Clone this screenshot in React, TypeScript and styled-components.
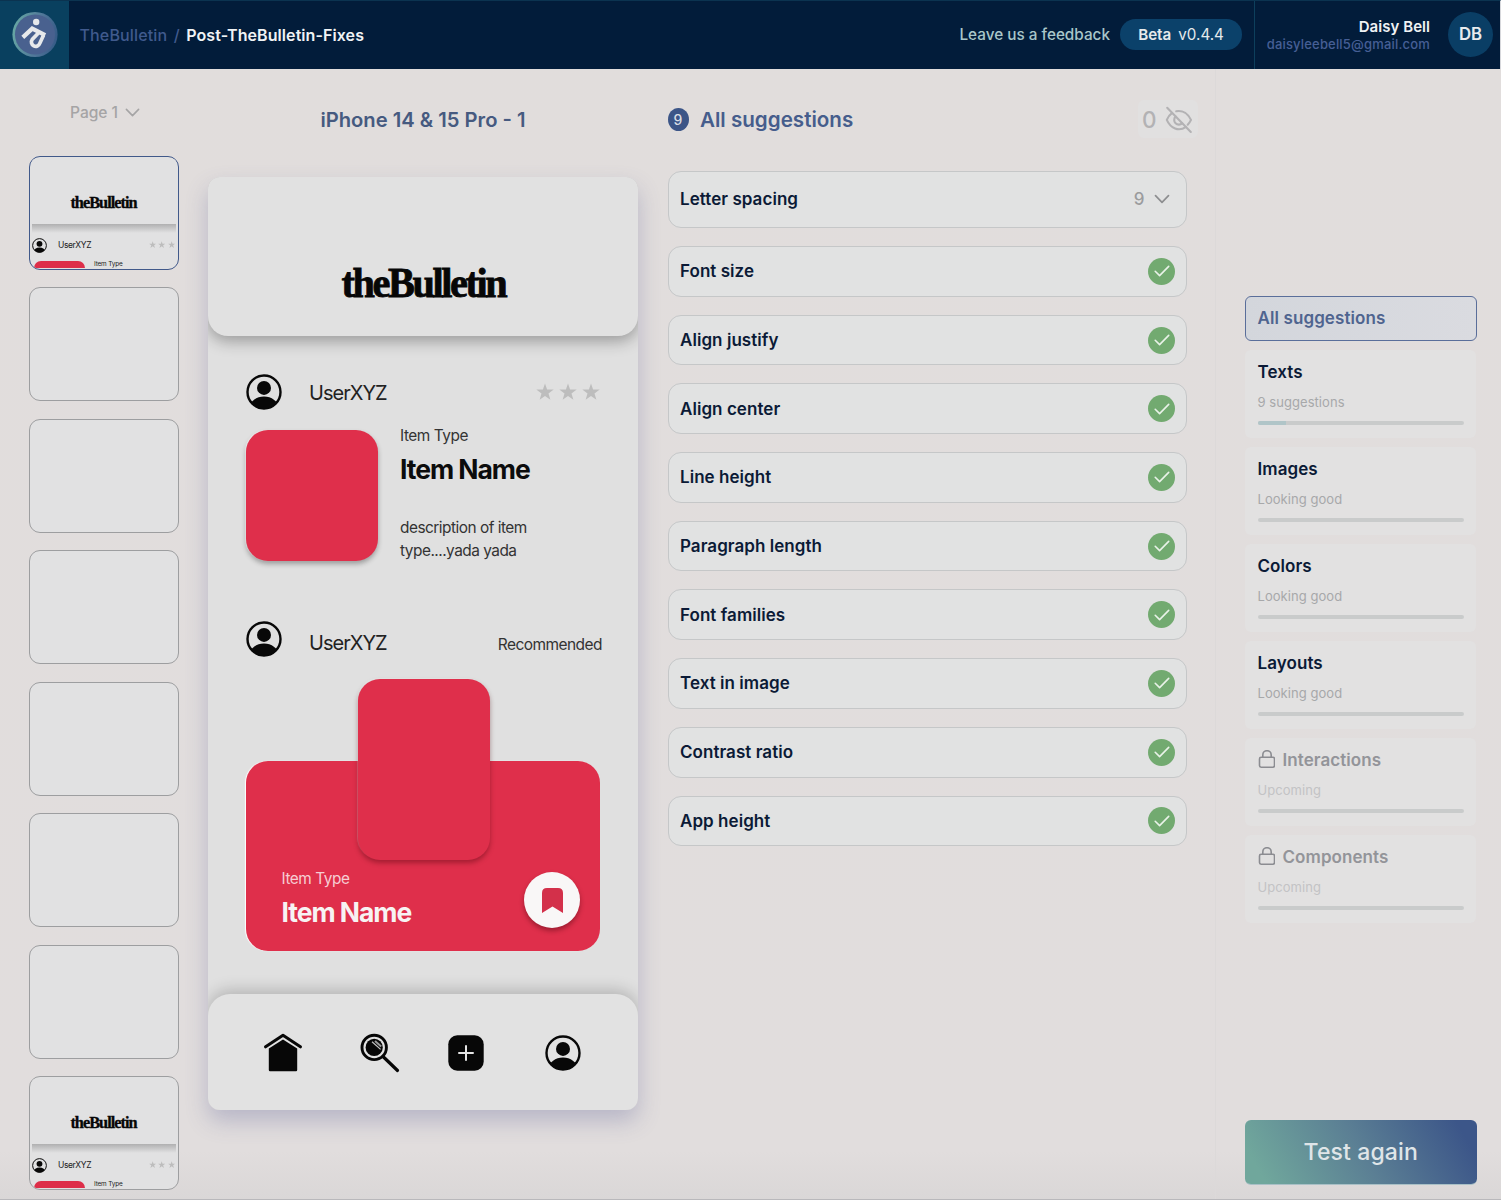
import React from "react";
import styled, { createGlobalStyle } from "styled-components";

const Global = createGlobalStyle`
  *, *::before, *::after { box-sizing: border-box; }
  body { margin: 0; background: #e1dcdc; font-family: Inter, "Liberation Sans", sans-serif; }
  svg { display: block; flex: none; }
`;

/* ---------- shell ---------- */
const Page = styled.div`
  width: 1501px;
  height: 1200px;
  overflow: hidden;
  display: flex;
  flex-direction: column;
  background: linear-gradient(180deg, #e1dddc 0%, #e1dddd 96%, #dad7d7 100%);
  border-bottom: 1px solid #b9b8bb;
`;
const TopBar = styled.header`
  height: 69px;
  flex: none;
  display: flex;
  align-items: stretch;
  background: #021c3a;
  border-top: 1px solid #0b3350;
  border-right: 1px solid #d7d8dc;
`;
const LogoBox = styled.div`
  width: 69px;
  display: flex;
  align-items: center;
  justify-content: center;
  padding-bottom: 1px;
  background: #09405f;
`;
const Crumbs = styled.nav`
  display: flex;
  align-items: center;
  gap: 6.5px;
  padding: 0 0 1px 10.5px;
  font-size: 16px;
  font-weight: 500;
  color: #405a8d;
`;
const Crumb = styled.span<{ $current?: boolean }>`
  color: ${(p) => (p.$current ? "#f0f3f5" : "#405a8d")};
  font-weight: ${(p) => (p.$current ? 600 : 500)};
  letter-spacing: ${(p) => (p.$current ? 0.08 : 0.15)}px;
`;
const BarRight = styled.div`
  margin-left: auto;
  display: flex;
  align-items: center;
`;
const Feedback = styled.span`
  font-size: 15.3px;
  font-weight: 500;
  padding-bottom: 1px;
  color: #a9c6c9;
  margin-right: 10px;
`;
const Version = styled.div`
  width: 122px;
  height: 31px;
  margin-bottom: 1px;
  border-radius: 16px;
  background: #0b416a;
  color: #e6eaec;
  display: flex;
  align-items: center;
  justify-content: center;
  gap: 7px;
  font-size: 15.2px;
  b { font-weight: 600; }
`;
const Account = styled.div`
  margin-left: 12px;
  height: 100%;
  width: 246px;
  border-left: 1px solid #0d3f5c;
  display: flex;
  align-items: center;
  justify-content: flex-end;
  gap: 18px;
  padding: 0 7px 1px 0;
`;
const Identity = styled.div`
  text-align: right;
  white-space: nowrap;
`;
const Name = styled.div`
  font-size: 15px;
  font-weight: 600;
  line-height: 18px;
  letter-spacing: 0.05px;
  color: #f0f2f4;
`;
const Mail = styled.div`
  font-size: 13px;
  line-height: 16px;
  letter-spacing: 0.18px;
  color: #465f95;
  font-weight: 500;
`;
const Initials = styled.div`
  width: 45px;
  height: 45px;
  padding-bottom: 1px;
  border-radius: 50%;
  background: #0a3e65;
  color: #e8ecee;
  font-size: 16.8px;
  font-weight: 600;
  display: flex;
  align-items: center;
  justify-content: center;
`;
const Body = styled.main`
  flex: 1;
  min-height: 0;
  display: grid;
  grid-template-columns: 208px 430px 578px 285px;
`;

/* ---------- page rail ---------- */
const Rail = styled.aside`
  padding: 32px 0 0 29px;
`;
const PagePicker = styled.div`
  display: flex;
  align-items: center;
  height: 22px;
  gap: 7px;
  margin: 0 0 33px 41px;
  font-size: 15.6px;
  font-weight: 500;
  letter-spacing: -0.05px;
  color: #a5a4a5;
`;
const ThumbList = styled.div`
  display: flex;
  flex-direction: column;
  gap: 17.5px;
`;
const Thumb = styled.div<{ $active?: boolean }>`
  width: 150px;
  height: 113.95px;
  padding: 1.5px 2px;
  border-radius: 11px;
  border: 1.5px solid ${(p) => (p.$active ? "#41598a" : "#9d9ea0")};
  background: #e1e1e2;
  overflow: hidden;
`;
const MiniHead = styled.div`
  height: 65px;
  display: flex;
  justify-content: center;
  align-items: center;
  padding-top: 22px;
  background: #e1e1e2;
`;
const MiniShade = styled.div`
  height: 9px;
  background: linear-gradient(180deg, rgba(0, 0, 0, 0.22), rgba(0, 0, 0, 0));
`;
const MiniUser = styled.div`
  margin-top: 5px;
  height: 15px;
  display: flex;
  align-items: center;
  font-size: 8.5px;
  letter-spacing: -0.4px;
  color: #222;
`;
const MiniName = styled.span`
  margin-left: 11px;
`;
const MiniItem = styled.div`
  display: flex;
  height: 8px;
  margin-top: 7px;
  padding-left: 2px;
  overflow: hidden;
  font-size: 6.4px;
  line-height: 8px;
  letter-spacing: -0.15px;
  color: #222;
  gap: 9px;
`;
const MiniRed = styled.div`
  width: 51px;
  height: 7px;
  margin-top: 1px;
  border-radius: 8px 8px 0 0;
  background: #dd2e49;
`;

/* ---------- phone preview ---------- */
const Preview = styled.section`
  display: flex;
  flex-direction: column;
  align-items: center;
`;
const ScreenTitle = styled.h2`
  margin: 37px 0 44px;
  height: 27px;
  line-height: 27px;
  font-size: 20.2px;
  font-weight: 600;
  color: #465a80;
  white-space: nowrap;
`;
const Phone = styled.div`
  width: 430px;
  height: 933px;
  border-radius: 12px;
  background: #e0e0e0;
  overflow: hidden;
  display: flex;
  flex-direction: column;
`;
const PhoneShadow = styled.div`
  border-radius: 12px;
  box-shadow: 0 11px 22px rgba(88, 94, 150, 0.3);
`;
const PhoneHead = styled.div`
  height: 159px;
  flex: none;
  border-radius: 12px 12px 20px 20px;
  background: #e1e1e1;
  box-shadow: 0 5px 16px rgba(0, 0, 0, 0.32);
  display: flex;
  align-items: center;
  justify-content: center;
  padding-top: 53px;
`;
const Wordmark = styled.span<{ $size: number; $squeeze: number }>`
  font-family: "Liberation Serif", serif;
  font-weight: 700;
  font-size: ${(p) => p.$size}px;
  line-height: 1;
  letter-spacing: -0.06em;
  color: #070707;
  -webkit-text-stroke: ${(p) => p.$size * 0.02}px #070707;
  transform: scaleX(${(p) => p.$squeeze});
  white-space: nowrap;
`;
const PhoneBody = styled.div`
  flex: 1;
  padding: 38px 36px 0 38px;
`;
const UserRow = styled.div`
  display: flex;
  align-items: center;
  height: 36px;
`;
const UserName = styled.span<{ $drop: number }>`
  margin-left: 27px;
  padding-top: ${(p) => p.$drop}px;
  font-size: 20px;
  font-weight: 400;
  letter-spacing: -0.97px;
  color: #222;
`;
const Stars = styled.div<{ $gap: number; $right?: number }>`
  margin-left: auto;
  margin-right: ${(p) => p.$right ?? 0}px;
  display: flex;
  gap: ${(p) => p.$gap}px;
`;
const Tag = styled.span`
  margin-left: auto;
  padding-top: 12px;
  font-size: 15.5px;
  letter-spacing: -0.55px;
  color: #333;
`;
const Item = styled.div`
  display: flex;
  gap: 22px;
  margin: 20px 0 58.5px;
  height: 132px;
`;
const RedTile = styled.div`
  width: 132px;
  height: 131px;
  flex: none;
  border-radius: 22px;
  background: #df2f4b;
  box-shadow: 0 3px 5px rgba(0, 0, 0, 0.3), -1px 0 1px rgba(255, 255, 255, 0.9);
`;
const ItemCopy = styled.div`
  display: flex;
  flex-direction: column;
  white-space: nowrap;
`;
const ItemType = styled.div<{ $light?: boolean }>`
  height: 20px;
  margin-top: -4px;
  line-height: 20px;
  font-size: 15.4px;
  letter-spacing: -0.45px;
  color: ${(p) => (p.$light ? "#f6cdd3" : "#343434")};
`;
const ItemName = styled.div<{ $light?: boolean }>`
  height: 32px;
  margin-top: 7px;
  line-height: 32px;
  font-size: 26.5px;
  font-weight: 700;
  letter-spacing: -1.05px;
  color: ${(p) => (p.$light ? "#f7f3f3" : "#0c0c0c")};
`;
const Description = styled.p`
  margin: 31px 0 0;
  font-size: 15.4px;
  line-height: 23px;
  letter-spacing: -0.5px;
  color: #333;
`;
const Feature = styled.div`
  position: relative;
  width: 354px;
  height: 272px;
  margin-top: 22.5px;
  padding-top: 82px;
`;
const FeatureCard = styled.div`
  height: 190px;
  border-radius: 22px;
  background: #df2f4b;
  box-shadow: -1px 0 1px #fff;
  display: flex;
  align-items: flex-end;
  justify-content: space-between;
  padding: 0 20px 23px 35.5px;
`;
const FeatureCopy = styled.div`
  height: 55px;
`;
const FeatureTile = styled.div`
  position: absolute;
  left: 112px;
  top: 0;
  width: 132px;
  height: 181px;
  border-radius: 22px;
  background: #df2f4b;
  box-shadow: 0 3px 5px rgba(70, 0, 10, 0.38), -1px -1px 1px rgba(255, 255, 255, 0.25);
`;
const SaveButton = styled.div`
  width: 56px;
  height: 56px;
  border-radius: 50%;
  background: #f9f7f7;
  box-shadow: 0 3px 5px rgba(60, 0, 10, 0.4);
  display: flex;
  align-items: center;
  justify-content: center;
`;
const PhoneNav = styled.div`
  height: 116px;
  flex: none;
  border-radius: 22px 22px 12px 12px;
  background: #e2e2e2;
  box-shadow: 0 -4px 16px rgba(0, 0, 0, 0.2);
  display: flex;
  align-items: center;
  padding: 1px 0 0 56px;
`;
const NavSlot = styled.span<{ $after?: number }>`
  margin-right: ${(p) => p.$after ?? 0}px;
`;

/* ---------- suggestions ---------- */
const Suggestions = styled.section`
  padding: 27px 24px 0 29.5px;
  border-right: 1px solid #dcd9d9;
`;
const SuggestHead = styled.div`
  display: flex;
  align-items: center;
  height: 46px;
`;
const CountBadge = styled.span`
  width: 21px;
  height: 23px;
  border-radius: 50%;
  background: #3c5587;
  color: #d9dde4;
  font-size: 14px;
  font-weight: 500;
  display: flex;
  align-items: center;
  justify-content: center;
`;
const SuggestTitle = styled.h2`
  margin: 0 0 0 11.5px;
  font-size: 20.6px;
  font-weight: 600;
  color: #465d8c;
`;
const HiddenCount = styled.div`
  margin: 0 -6.5px 0 auto;
  height: 38px;
  width: 60px;
  border-radius: 6px;
  background: #e1e0e0;
  display: flex;
  align-items: center;
  justify-content: center;
  gap: 8.5px;
  padding-top: 1px;
  font-size: 22.5px;
  font-weight: 500;
  color: #b3b2b4;
`;
const CheckList = styled.div`
  width: 519.5px;
  margin-top: 28.5px;
  display: flex;
  flex-direction: column;
  gap: 18px;
`;
const CheckRow = styled.div<{ $open?: boolean }>`
  height: ${(p) => (p.$open ? 57.5 : 50.7)}px;
  border: 1px solid #c5c7c8;
  border-radius: 13px;
  background: #e1e2e2;
  display: flex;
  align-items: center;
  justify-content: space-between;
  padding: 0 ${(p) => (p.$open ? 16.5 : 11)}px 0 11.5px;
  font-size: 17px;
  font-weight: 600;
  letter-spacing: 0.05px;
  color: #0b1a36;
`;
const RowCount = styled.span`
  display: flex;
  align-items: center;
  gap: 9px;
  font-weight: 500;
  color: #9b9c9e;
`;
const Passed = styled.span`
  width: 27px;
  height: 27px;
  border-radius: 50%;
  background: #72aa70;
  display: flex;
  align-items: center;
  justify-content: center;
`;

/* ---------- categories ---------- */
const Side = styled.aside`
  display: flex;
  flex-direction: column;
  padding: 226.5px 25px 14.5px 29px;
`;
const AllButton = styled.div`
  height: 45.5px;
  width: 231.5px;
  border: 1.5px solid #5a6e9a;
  border-radius: 6px;
  background: linear-gradient(90deg, #d3d6dc, #dadbe0);
  padding: 0 11.5px;
  display: flex;
  align-items: center;
  font-size: 17px;
  font-weight: 600;
  letter-spacing: 0.1px;
  color: #4f648f;
`;
const Category = styled.div`
  height: 88.5px;
  margin-top: 8.5px;
  border-radius: 6px;
  padding: 11px 12.5px 0 12.5px;
  background: #e2e1e1;
`;
const CategoryTitle = styled.div<{ $locked?: boolean }>`
  height: 22px;
  display: flex;
  align-items: center;
  gap: 7.5px;
  font-size: 17px;
  font-weight: 600;
  letter-spacing: 0.07px;
  color: ${(p) => (p.$locked ? "#939499" : "#0b1a36")};
`;
const CategoryNote = styled.div<{ $locked?: boolean }>`
  height: 18px;
  margin: 10px 0 10px;
  line-height: 18px;
  font-size: 13px;
  letter-spacing: 0.05px;
  color: ${(p) => (p.$locked ? "#c3c3c5" : "#a7a8aa")};
`;
const Track = styled.div`
  height: 4px;
  border-radius: 2px;
  background: #c9cbcb;
  overflow: hidden;
`;
const Fill = styled.div`
  height: 100%;
  background: #b0c5c8;
`;
const TestButton = styled.div`
  margin-top: auto;
  width: 231.5px;
  height: 65px;
  border-radius: 6px;
  border-bottom: 1px solid #a9c0c6;
  background: linear-gradient(60deg, #70a79c 8%, #5b7f94 50%, #3c5689 92%);
  color: #dfe5e8;
  display: flex;
  align-items: center;
  justify-content: center;
  font-size: 23px;
  font-weight: 500;
  letter-spacing: 0.13px;
`;

/* ---------- icons ---------- */
const Chevron = ({ size, color, weight = 1.7 }: { size: number; color: string; weight?: number }) => (
  <svg width={size} height={size} viewBox="0 0 16 16" fill="none" stroke={color} strokeWidth={weight} strokeLinecap="round" strokeLinejoin="round">
    <path d="M1.5 4.7 8 11.3 14.5 4.7" />
  </svg>
);
const Person = ({ size }: { size: number }) => (
  <svg width={size} height={size} viewBox="0 0 36 36">
    <defs>
      <clipPath id="head-ring"><circle cx="18" cy="18" r="16.8" /></clipPath>
    </defs>
    <circle cx="18" cy="18" r="16.5" fill="none" stroke="#080808" strokeWidth="2.4" />
    <circle cx="18" cy="13.9" r="7" fill="#080808" />
    <ellipse cx="18" cy="33" rx="14" ry="10.4" fill="#080808" clipPath="url(#head-ring)" />
  </svg>
);
const Star = ({ size }: { size: number }) => (
  <svg width={size} height={size} viewBox="0 0 18 18">
    <path d="M9 .4 11.1 6.5H17.7L12.5 10.4 14.4 16.8 9 13 3.6 16.8 5.5 10.4.3 6.5H6.9Z" fill="#bdbdbd" />
  </svg>
);
const BrandMark = () => (
  <svg width="46" height="47" viewBox="0 0 46 47">
    <defs>
      <linearGradient id="ring" x1="0" y1="0.4" x2="1" y2="0.6">
        <stop offset="0" stopColor="#67a7a4" />
        <stop offset="0.6" stopColor="#4f7598" />
        <stop offset="1" stopColor="#365a86" />
      </linearGradient>
    </defs>
    <circle cx="23" cy="23.5" r="22.6" fill="url(#ring)" />
    <circle cx="23" cy="23.5" r="20" fill="#49618f" />
    <circle cx="24.2" cy="11" r="3.2" fill="#e7e9eb" />
    <g fill="none" stroke="#e7e9eb" strokeLinejoin="miter">
      <path d="M10.8 26.4 20.2 17.6 33.2 24.2" strokeWidth="4.2" />
      <path d="M31.6 24 27.8 32.3A4.3 4.3 0 1 1 20.2 28.5L26.4 22" strokeWidth="3.7" />
    </g>
  </svg>
);
const EyeOff = () => (
  <svg width="28" height="28" viewBox="0 0 28 28" fill="none" stroke="#b3b2b4" strokeWidth="2.1" strokeLinecap="round" strokeLinejoin="round">
    <path d="M2.2 1.8 25.8 26" />
    <path d="M11.2 5.2C18 3.9 23.3 8.2 26 13.9 25.2 15.7 24.1 17.3 22.7 18.7" />
    <path d="M6.9 7.2C4.7 8.8 3 11.1 1.8 13.9 5.5 22.4 13.8 26 21 20.8" />
    <path d="M10.6 10.6A4.7 4.7 0 0 0 17.2 17.3" />
  </svg>
);
const Tick = () => (
  <svg width="16" height="12" viewBox="0 0 16 12" fill="none" stroke="#e9f2e8" strokeWidth="1.6" strokeLinecap="round" strokeLinejoin="round">
    <path d="M1.2 6.3 5.6 10.6 14.7 1.4" />
  </svg>
);
const Lock = () => (
  <svg width="17.5" height="19" viewBox="0 0 17.5 19" fill="none" stroke="#8b8c91" strokeWidth="1.6" strokeLinejoin="round">
    <rect x="1.5" y="7.3" width="15" height="9.9" rx="1.6" />
    <path d="M4.8 7.3V4.9a4.2 4.2 0 0 1 8.4 0v2.4" />
  </svg>
);
const Bookmark = () => (
  <svg width="23" height="27" viewBox="0 0 23 27">
    <path d="M1 26V6Q1 1 6 1H17Q22 1 22 6V26L11.5 19.4Z" fill="#d3304a" />
  </svg>
);
const Home = () => (
  <svg width="38" height="39" viewBox="0 0 38 39">
    <path d="M1.6 13.8 19 2.3 36.4 13.8" fill="none" stroke="#070707" strokeWidth="3" strokeLinecap="round" strokeLinejoin="round" />
    <path d="M4.8 15.6 19 6.6 33.2 15.6V37Q33.2 38.3 32 38.3H6Q4.8 38.3 4.8 37Z" fill="#070707" />
  </svg>
);
const Magnifier = () => (
  <svg width="40" height="40" viewBox="0 0 40 40" fill="none">
    <path d="M23.5 24 37.5 37.5" stroke="#070707" strokeWidth="3.2" strokeLinecap="round" />
    <circle cx="14.2" cy="14.4" r="12.2" stroke="#070707" strokeWidth="2.9" />
    <circle cx="14.2" cy="14.4" r="8.6" fill="#070707" />
    <path d="M12 8.8 20.6 16.4" stroke="#c4c4c4" strokeWidth="1.2" />
    <path d="M15 8 21.2 13.4" stroke="#9a9a9a" strokeWidth="2" />
  </svg>
);
const PlusBox = () => (
  <svg width="36" height="36" viewBox="0 0 36 36">
    <rect x="0.3" y="0.3" width="35.4" height="35.4" rx="9" fill="#070707" />
    <path d="M18 11V25M11 18H25" stroke="#e4e4e4" strokeWidth="2" strokeLinecap="round" />
  </svg>
);

/* ---------- pieces ---------- */
const Miniature = () => (
  <>
    <MiniHead><Wordmark $size={17} $squeeze={0.96}>theBulletin</Wordmark></MiniHead>
    <MiniShade />
    <MiniUser>
      <Person size={15} />
      <MiniName>UserXYZ</MiniName>
      <Stars $gap={2} $right={1}><Star size={7.4} /><Star size={7.4} /><Star size={7.4} /></Stars>
    </MiniUser>
    <MiniItem><MiniRed />Item Type</MiniItem>
  </>
);

const checks = ["Font size", "Align justify", "Align center", "Line height", "Paragraph length", "Font families", "Text in image", "Contrast ratio", "App height"];
const thumbs = [true, false, false, false, false, false, false, true];
const categories = [
  { title: "Texts", note: "9 suggestions", fill: 14 },
  { title: "Images", note: "Looking good" },
  { title: "Colors", note: "Looking good" },
  { title: "Layouts", note: "Looking good" },
  { title: "Interactions", note: "Upcoming", locked: true },
  { title: "Components", note: "Upcoming", locked: true },
];

export default function App() {
  return (
    <Page>
      <Global />
      <TopBar>
        <LogoBox><BrandMark /></LogoBox>
        <Crumbs>
          <Crumb>TheBulletin</Crumb>
          <span>/</span>
          <Crumb $current>Post-TheBulletin-Fixes</Crumb>
        </Crumbs>
        <BarRight>
          <Feedback>Leave us a feedback</Feedback>
          <Version><b>Beta</b><span>v0.4.4</span></Version>
          <Account>
            <Identity>
              <Name>Daisy Bell</Name>
              <Mail>daisyleebell5@gmail.com</Mail>
            </Identity>
            <Initials>DB</Initials>
          </Account>
        </BarRight>
      </TopBar>
      <Body>
        <Rail>
          <PagePicker>Page 1 <Chevron size={15} color="#a5a4a5" /></PagePicker>
          <ThumbList>
            {thumbs.map((filled, i) => (
              <Thumb key={i} $active={i === 0}>{filled && <Miniature />}</Thumb>
            ))}
          </ThumbList>
        </Rail>

        <Preview>
          <ScreenTitle>iPhone 14 &amp; 15 Pro - 1</ScreenTitle>
          <PhoneShadow>
            <Phone>
              <PhoneHead><Wordmark $size={42} $squeeze={0.96}>theBulletin</Wordmark></PhoneHead>
              <PhoneBody>
                <UserRow>
                  <Person size={36} />
                  <UserName $drop={2}>UserXYZ</UserName>
                  <Stars $gap={5} $right={2.5}><Star size={18} /><Star size={18} /><Star size={18} /></Stars>
                </UserRow>
                <Item>
                  <RedTile />
                  <ItemCopy>
                    <ItemType>Item Type</ItemType>
                    <ItemName>Item Name</ItemName>
                    <Description>description of item<br />type....yada yada</Description>
                  </ItemCopy>
                </Item>
                <UserRow>
                  <Person size={36} />
                  <UserName $drop={8}>UserXYZ</UserName>
                  <Tag>Recommended</Tag>
                </UserRow>
                <Feature>
                  <FeatureCard>
                    <FeatureCopy>
                      <ItemType $light>Item Type</ItemType>
                      <ItemName $light>Item Name</ItemName>
                    </FeatureCopy>
                    <SaveButton><Bookmark /></SaveButton>
                  </FeatureCard>
                  <FeatureTile />
                </Feature>
              </PhoneBody>
              <PhoneNav>
                <NavSlot $after={58}><Home /></NavSlot>
                <NavSlot $after={48}><Magnifier /></NavSlot>
                <NavSlot $after={61}><PlusBox /></NavSlot>
                <NavSlot><Person size={36} /></NavSlot>
              </PhoneNav>
            </Phone>
          </PhoneShadow>
        </Preview>

        <Suggestions>
          <SuggestHead>
            <CountBadge>9</CountBadge>
            <SuggestTitle>All suggestions</SuggestTitle>
            <HiddenCount>0 <EyeOff /></HiddenCount>
          </SuggestHead>
          <CheckList>
            <CheckRow $open>
              Letter spacing
              <RowCount>9 <Chevron size={16} color="#8d8e90" /></RowCount>
            </CheckRow>
            {checks.map((label) => (
              <CheckRow key={label}>{label}<Passed><Tick /></Passed></CheckRow>
            ))}
          </CheckList>
        </Suggestions>

        <Side>
          <AllButton>All suggestions</AllButton>
          {categories.map((c) => (
            <Category key={c.title}>
              <CategoryTitle $locked={c.locked}>{c.locked && <Lock />}{c.title}</CategoryTitle>
              <CategoryNote $locked={c.locked}>{c.note}</CategoryNote>
              <Track>{c.fill && <Fill style={{ width: `${c.fill}%` }} />}</Track>
            </Category>
          ))}
          <TestButton>Test again</TestButton>
        </Side>
      </Body>
    </Page>
  );
}
